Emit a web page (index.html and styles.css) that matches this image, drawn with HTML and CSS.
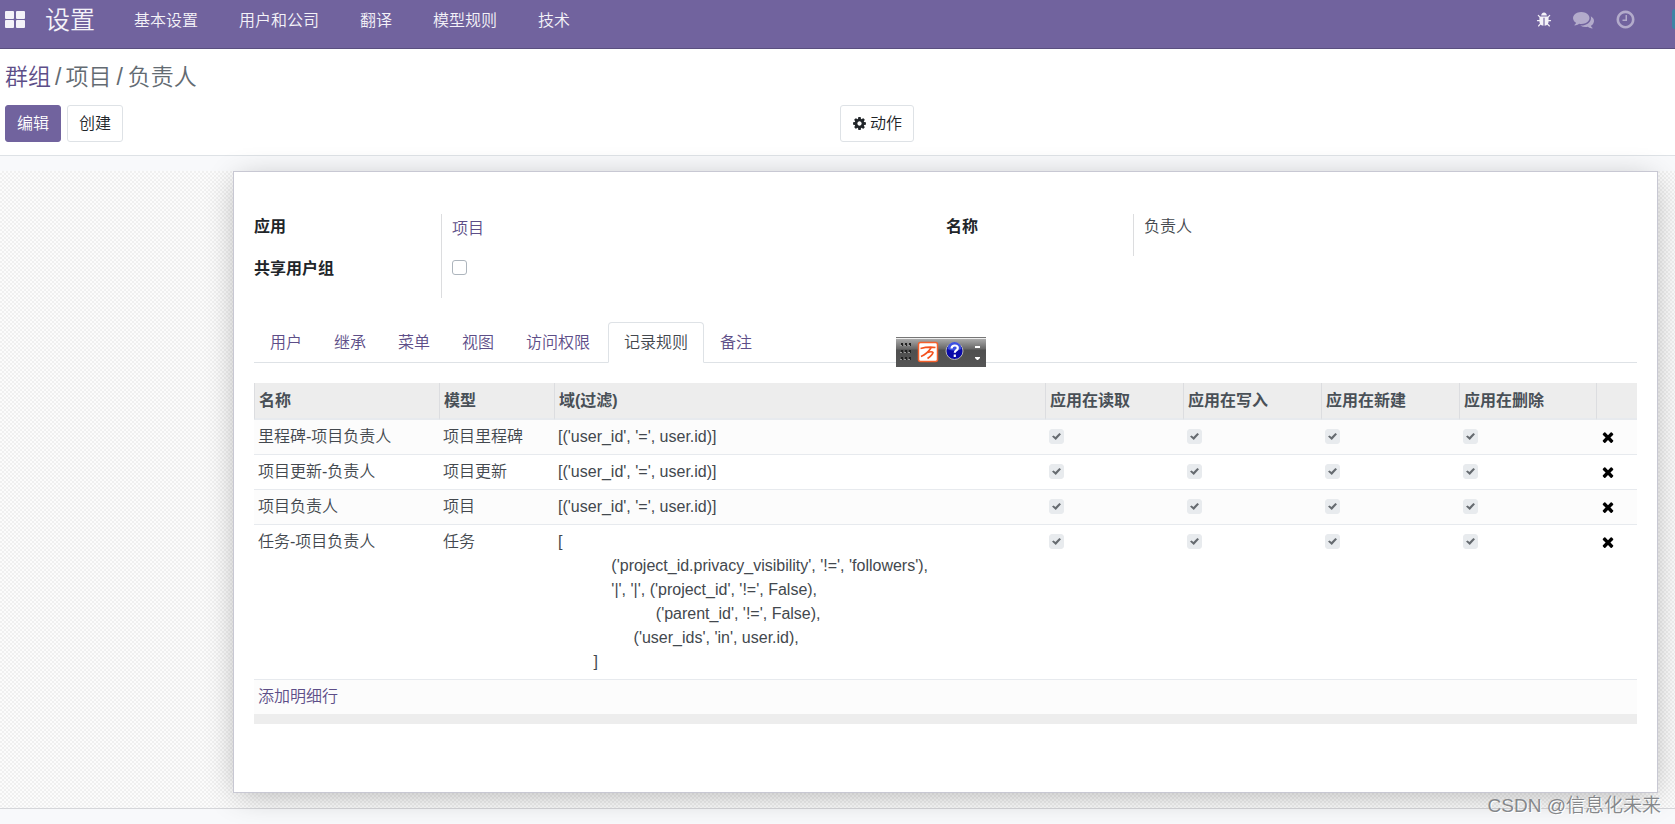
FILE: index.html
```html
<!DOCTYPE html>
<html lang="zh-CN">
<head>
<meta charset="utf-8">
<title>群组 / 项目 / 负责人</title>
<link rel="stylesheet" href="styles.css">
</head>
<body>
<svg class="defs" aria-hidden="true">
  <symbol id="i-bug" viewBox="0 0 1792 1792"><path d="M1696 960q0 26-19 45t-45 19h-224q0 171-67 290l208 209q19 19 19 45t-19 45q-18 19-45 19t-45-19l-198-197q-5 5-15 13t-42 28.500-65 36.500-82 29-97 13v-896h-128v896q-51 0-101.500-13.500t-87-33-66-39-43.500-32.500l-15-14-183 207q-20 21-48 21-24 0-43-16-19-18-20.500-44.500t15.500-46.500l202-227q-58-114-58-274h-224q-26 0-45-19t-19-45 19-45 45-19h224v-294l-173-173q-19-19-19-45t19-45 45-19 45 19l173 173h844l173-173q19-19 45-19t45 19 19 45-19 45l-173 173v294h224q26 0 45 19t19 45zm-480-576h-640q0-133 93.500-226.500t226.500-93.500 226.500 93.500 93.500 226.500z"/></symbol>
  <symbol id="i-comments" viewBox="0 0 1792 1792"><path d="M1408 768q0 139-94 257t-256.500 186.500-353.500 68.500q-86 0-176-16-124 88-278 128-36 9-86 16h-3q-11 0-20.500-8t-11.500-21q-1-3-1-6.500t.5-6.500 2-6l2.500-5 3.500-5.500 4-5 4.500-5 4-4.500q5-6 23-25t26-29.500 22.500-29 25-38.500 20.500-44q-124-72-195-177t-71-224q0-139 94-257t256.500-186.500 353.500-68.500 353.500 68.500 256.500 186.500 94 257zm384 256q0 120-71 224.500t-195 176.500q10 24 20.500 44t25 38.500 22.500 29 26 29.500 23 25q1 1 4 4.500t4.500 5 4 5 3.500 5.500l2.500 5 2 6 .5 6.500-1 6.500q-3 14-13 22t-22 7q-50-7-86-16-154-40-278-128-90 16-176 16-271 0-472-132 58 4 88 4 161 0 309-45t264-129q125-92 192-212t67-254q0-77-23-152 129 71 204 178t75 230z"/></symbol>
  <symbol id="i-clock" viewBox="0 0 1792 1792"><path d="M1024 544v448q0 14-9 23t-23 9h-320q-14 0-23-9t-9-23v-64q0-14 9-23t23-9h224v-352q0-14 9-23t23-9h64q14 0 23 9t9 23zm416 352q0-148-73-273t-198-198-273-73-273 73-198 198-73 273 73 273 198 198 273 73 273-73 198-198 73-273zm224 0q0 209-103 385.500t-279.500 279.500-385.500 103-385.500-103-279.500-279.500-103-385.500 103-385.500 279.500-279.500 385.500-103 385.500 103 279.500 279.500 103 385.500z"/></symbol>
  <symbol id="i-cog" viewBox="0 0 1792 1792"><path d="M1152 896q0-106-75-181t-181-75-181 75-75 181 75 181 181 75 181-75 75-181zm512-109v222q0 12-8 23t-20 13l-185 28q-19 54-39 91 35 50 107 138 10 12 10 25t-9 23q-27 37-99 108t-94 71q-12 0-26-9l-138-108q-44 23-91 38-16 136-29 186-7 28-36 28h-222q-14 0-24.500-8.500t-11.500-21.500l-28-184q-49-16-90-37l-141 107q-10 9-25 9-14 0-25-11-126-114-165-168-7-10-7-23 0-12 8-23 15-21 51-66.500t54-70.500q-27-50-41-99l-183-27q-13-2-21-12.500t-8-23.500v-222q0-12 8-23t19-13l186-28q14-46 39-92-40-57-107-138-10-12-10-24 0-10 9-23 26-36 98.500-107.500t94.500-71.500q13 0 26 10l138 107q44-23 91-38 16-136 29-186 7-28 36-28h222q14 0 24.500 8.500t11.500 21.500l28 184q49 16 90 37l142-107q9-9 24-9 13 0 25 10 129 119 165 170 7 8 7 22 0 12-8 23-15 21-51 66.500t-54 70.500q26 50 41 98l183 28q13 2 21 12.500t8 23.500z"/></symbol>
  <symbol id="i-times" viewBox="0 0 1792 1792"><path d="M1490 1322q0 40-28 68l-136 136q-28 28-68 28t-68-28l-294-294-294 294q-28 28-68 28t-68-28l-136-136q-28-28-28-68t28-68l294-294-294-294q-28-28-28-68t28-68l136-136q28-28 68-28t68 28l294 294 294-294q28-28 68-28t68 28l136 136q28 28 28 68t-28 68l-294 294 294 294q28 28 28 68z"/></symbol>
  <symbol id="i-apps" viewBox="0 0 20 17"><rect width="9" height="8" rx="1"/><rect x="11" width="9" height="8" rx="1"/><rect y="9" width="9" height="8" rx="1"/><rect x="11" y="9" width="9" height="8" rx="1"/></symbol>
</svg>

<header class="navbar">
  <button class="apps" aria-label="应用"><svg><use href="#i-apps"/></svg></button>
  <a class="brand" href="#">设置</a>
  <nav class="menu">
    <a href="#">基本设置</a>
    <a href="#">用户和公司</a>
    <a href="#">翻译</a>
    <a href="#">模型规则</a>
    <a href="#">技术</a>
  </nav>
  <div class="systray">
    <button class="bug" aria-label="调试"><svg><use href="#i-bug"/></svg></button>
    <button aria-label="消息"><svg><use href="#i-comments"/></svg></button>
    <button aria-label="活动"><svg><use href="#i-clock"/></svg></button>
    <span class="avatar"></span>
  </div>
</header>

<section class="control">
  <div class="crumbs"><a href="#">群组</a><span class="sep">/</span><span>项目<span class="sep">/</span>负责人</span></div>
  <div class="actions">
    <div class="group-btns">
      <button class="btn primary">编辑</button>
      <button class="btn">创建</button>
    </div>
    <div class="group-btns">
      <button class="btn"><svg><use href="#i-cog"/></svg>动作</button>
    </div>
  </div>
</section>

<main class="form-view">
  <div class="sheet-bg">
    <div class="sheet">
      <div class="groups">
        <dl class="fields">
          <dt>应用</dt><dd class="raised"><a href="#">项目</a></dd>
          <dt><label for="share">共享用户组</label></dt><dd><input id="share" class="box" type="checkbox"></dd>
        </dl>
        <dl class="fields">
          <dt>名称</dt><dd>负责人</dd>
        </dl>
      </div>

      <div class="tabs">
        <a href="#">用户</a><a href="#">继承</a><a href="#">菜单</a><a href="#">视图</a><a href="#">访问权限</a><a class="active" href="#">记录规则</a><a href="#">备注</a>
        <div class="toolbar">
          <svg width="90" height="30" viewBox="0 0 90 30">
            <g fill="#222"><path d="M5 6h2v3h-2zM9 6h2v3h-2zM13 6h2v3h-2zM5 13h2v3h-2zM9 13h2v3h-2zM13 13h2v3h-2zM5 20h2v3h-2zM9 20h2v3h-2zM13 20h2v3h-2z"/></g>
            <g fill="#999"><path d="M4 8h2v1h-2zM8 8h2v1h-2zM12 8h2v1h-2zM4 15h2v1h-2zM8 15h2v1h-2zM12 15h2v1h-2zM4 22h2v1h-2zM8 22h2v1h-2zM12 22h2v1h-2z"/></g>
            <rect x="22.500" y="5.500" width="19" height="19" rx="2" fill="#fff" stroke="#f4602c" stroke-width="1.500"/>
            <path d="M24.500 11.500Q32 9.500 39.500 10.500M35 11Q31 17 25 19.500M31.500 15.500Q36 14 37 15.500Q36.500 18 31.500 21.500" fill="none" stroke="#f4511e" stroke-width="1.600"/>
            <circle cx="58.500" cy="14" r="8.500" fill="#0a0aa8" stroke="#b5b5b5"/>
            <path d="M51.500 12a7 7 0 0 1 14 0q-7 3-14 0" fill="#3c50e0"/>
            <path d="M55.500 11.500q.3-3 3.300-3q3 0 3 2.500q0 1.500-1.700 2.500q-1.300.8-1.300 2.300M58.800 17.500v2.500" fill="none" stroke="#fff" stroke-width="2.200"/>
            <path d="M79 9h5v2h-5zM79 20h5v1l-2 2h-1l-2-2z" fill="#fff"/>
          </svg>
        </div>
      </div>

      <table class="list">
        <colgroup><col class="c-name"><col class="c-model"><col><col class="c-flag"><col class="c-flag"><col class="c-flag"><col class="c-last"><col class="c-del"></colgroup>
        <thead>
          <tr><th>名称</th><th>模型</th><th>域(过滤)</th><th>应用在读取</th><th>应用在写入</th><th>应用在新建</th><th>应用在删除</th><th></th></tr>
        </thead>
        <tbody>
          <tr><td>里程碑-项目负责人</td><td>项目里程碑</td><td>[('user_id', '=', user.id)]</td>
            <td><input class="box" type="checkbox" checked disabled aria-label="应用在读取"></td><td><input class="box" type="checkbox" checked disabled aria-label="应用在写入"></td><td><input class="box" type="checkbox" checked disabled aria-label="应用在新建"></td><td><input class="box" type="checkbox" checked disabled aria-label="应用在删除"></td>
            <td><button class="del" aria-label="删除"><svg><use href="#i-times"/></svg></button></td></tr>
          <tr><td>项目更新-负责人</td><td>项目更新</td><td>[('user_id', '=', user.id)]</td>
            <td><input class="box" type="checkbox" checked disabled aria-label="应用在读取"></td><td><input class="box" type="checkbox" checked disabled aria-label="应用在写入"></td><td><input class="box" type="checkbox" checked disabled aria-label="应用在新建"></td><td><input class="box" type="checkbox" checked disabled aria-label="应用在删除"></td>
            <td><button class="del" aria-label="删除"><svg><use href="#i-times"/></svg></button></td></tr>
          <tr><td>项目负责人</td><td>项目</td><td>[('user_id', '=', user.id)]</td>
            <td><input class="box" type="checkbox" checked disabled aria-label="应用在读取"></td><td><input class="box" type="checkbox" checked disabled aria-label="应用在写入"></td><td><input class="box" type="checkbox" checked disabled aria-label="应用在新建"></td><td><input class="box" type="checkbox" checked disabled aria-label="应用在删除"></td>
            <td><button class="del" aria-label="删除"><svg><use href="#i-times"/></svg></button></td></tr>
          <tr><td>任务-项目负责人</td><td>任务</td><td class="code">[
            ('project_id.privacy_visibility', '!=', 'followers'),
            '|', '|', ('project_id', '!=', False),
                      ('parent_id', '!=', False),
                 ('user_ids', 'in', user.id),
        ]</td>
            <td><input class="box" type="checkbox" checked disabled aria-label="应用在读取"></td><td><input class="box" type="checkbox" checked disabled aria-label="应用在写入"></td><td><input class="box" type="checkbox" checked disabled aria-label="应用在新建"></td><td><input class="box" type="checkbox" checked disabled aria-label="应用在删除"></td>
            <td><button class="del" aria-label="删除"><svg><use href="#i-times"/></svg></button></td></tr>
          <tr><td colspan="8"><a href="#">添加明细行</a></td></tr>
        </tbody>
      </table>
      <div class="list-foot"></div>
    </div>
  </div>
</main>
<div class="watermark">CSDN @信息化未来</div>
</body>
</html>
```
FILE: styles.css
```css
* { box-sizing: border-box; }

body {
  position: relative;
  display: flex;
  flex-direction: column;
  min-height: 100vh;
  margin: 0;
  overflow: hidden;
  background: #f8f9fb;
  color: #43484e;
  font: 350 16px/24px "Liberation Sans", "Noto Sans CJK SC", sans-serif;
}

a { color: #5d4e88; text-decoration: none; }
button { font: inherit; cursor: pointer; }
svg { display: block; fill: currentColor; }
.defs { position: absolute; width: 0; height: 0; }

.navbar {
  display: flex;
  align-items: center;
  height: 49px;
  padding: 0 0 10px 5px;
  background: #71639e;
  border-bottom: 1px solid #5a4f7f;
  color: #f4f2f8;
}
.navbar a { color: inherit; }
.navbar button { padding: 0; border: 0; background: none; color: inherit; }
.apps svg { width: 20px; height: 17px; }
.brand { margin-left: 20px; padding-top: 2px; font-size: 25px; line-height: 36px; }
.menu { display: flex; gap: 41px; margin-left: 39px; padding-top: 4px; }
.systray { display: flex; align-items: center; gap: 21px; margin-left: auto; }
.systray button { opacity: .5; }
.systray .bug { padding-top: 1px; opacity: 1; }
.systray svg { width: 21px; height: 21px; }
.systray .bug svg { width: 16px; height: 16px; }
.avatar { width: 3px; height: 20px; margin-left: 15px; border-radius: 3px 0 0 3px; background: #3e84a5; }

.control {
  padding: 12px 5px 13px;
  background: #fff;
  border-bottom: 1px solid #dee2e6;
}
.crumbs { color: #636b72; font-size: 23px; line-height: 32px; }
.crumbs .sep { margin: 0 4px; }
.crumbs span .sep { margin: 0 5px; }
.actions { display: grid; grid-template-columns: 1fr 1fr; gap: 5px; margin-top: 12px; }
.group-btns { display: flex; gap: 6px; }
.btn {
  display: flex;
  align-items: center;
  gap: 3px;
  padding: 6px 11px;
  border: 1px solid #dee2e6;
  border-radius: 3px;
  background: #fff;
  color: #212529;
  line-height: 23px;
}
.btn.primary { border-color: #71639e; background: #71639e; color: #fff; }
.btn svg { width: 15px; height: 15px; }

.form-view { padding: 15px 0; }
.sheet-bg {
  padding: 0 17px 15px 233px;
  border-bottom: 1px solid #d5d6da;
  background: repeating-conic-gradient(#f0f0f0 0 25%, #fcfcfc 0 50%) 0 0 / 4px 4px;
}
.sheet {
  padding: 42px 20px 68px;
  border: 1px solid #c8c8d3;
  background: #fff;
  box-shadow: 0 5px 30px -5px rgba(0, 0, 0, .3);
}

.groups { display: grid; grid-template-columns: 1fr 1fr; column-gap: 1px; align-items: start; }
.fields { display: grid; grid-template-columns: 187px 1fr; margin: 0; }
.fields dt { padding-top: 1px; color: #212529; font-weight: bold; }
.fields dd { min-height: 42px; margin: 0; padding: 1px 0 0 10px; border-left: 1px solid #dcdddf; }
.fields .raised { padding-top: 3px; }
.fields .box { margin-top: 3px; }

.tabs {
  position: relative;
  display: flex;
  margin-top: 24px;
  border-bottom: 1px solid #dee2e6;
}
.tabs a {
  margin-bottom: -1px;
  padding: 8px 15px 7px;
  border: 1px solid transparent;
  border-radius: 4px 4px 0 0;
}
.tabs .active { margin-left: 2px; border-color: #dee2e6 #dee2e6 #fff; color: #43484e; background: #fff; }
.toolbar {
  position: absolute;
  top: 15px;
  left: 642px;
  height: 30px;
  background: linear-gradient(#777 0 1px, #eee 1px 2px, #aaa 2px, #666 12px, #4f4f4f 13px, #555);
}

.list { width: 100%; margin-top: 20px; border-collapse: separate; border-spacing: 0; table-layout: fixed; }
.c-name { width: 185px; }
.c-model { width: 115px; }
.c-flag { width: 138px; }
.c-last { width: 137px; }
.c-del { width: 41px; }
.list th {
  height: 37px;
  padding: 1px 4px 0;
  border-left: 1px solid #dcdde0;
  border-bottom: 2px solid #e7eaee;
  background: #ededed;
  color: #495057;
  text-align: left;
}
.list td { padding: 5px 4px; border-bottom: 1px solid #e7eaee; vertical-align: top; }
.list tr:last-child td { border-bottom: 0; }
.list tbody tr:nth-child(odd) { background: #fcfcfc; }
.code { white-space: pre-wrap; }
.list-foot { height: 10px; background: #ededed; }

.box {
  display: block;
  width: 15px;
  height: 15px;
  margin: 0;
  border: 1px solid #adb5bd;
  border-radius: 3px;
  appearance: none;
  background: #fff;
}
.box:checked { border-color: #e8ebee; background: #e8ebee; }
.box:checked::before {
  content: "";
  display: block;
  width: 9px;
  height: 7px;
  margin: 3px 2px;
  background: #666b70;
  clip-path: polygon(0 50%, 18% 36%, 38% 58%, 82% 0, 100% 18%, 42% 100%);
}
.list .box { margin: 4px 0 0; }
.del { display: block; margin: 4px 0 0; padding: 0; border: 0; background: none; color: #000; }
.del svg { width: 16px; height: 16px; }

.watermark {
  position: absolute;
  right: 14px;
  bottom: 4px;
  color: #85878a;
  font-size: 19px;
  line-height: 28px;
  text-shadow: 1px 1px 0 #fff;
}
```
